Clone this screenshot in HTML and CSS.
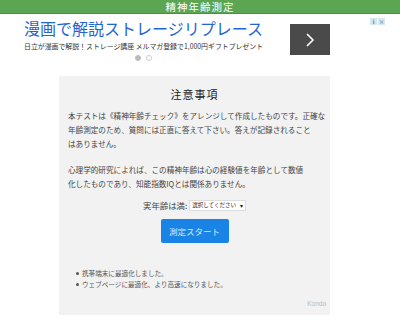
FILE: index.html
```html
<!DOCTYPE html>
<html lang="ja">

<head>
    <meta charset="UTF-8">
    <meta name="viewport" content="width=device-width, initial-scale=1.0">
    <title>精神年齢測定</title>
    <link rel="stylesheet" href="styles.css">
</head>

<body>
    <header class="site-header">精神年齢測定</header>

    <!-- Ad banner -->
    <div class="ad">
        <div class="ad-badges">
            <span class="ad-badge ad-info">i</span>
            <span class="ad-badge ad-close">&times;</span>
        </div>
        <div class="ad-row">
            <div class="ad-text">
                <div class="ad-title">漫画で解説ストレージリプレース</div>
                <div class="ad-sub">日立が漫画で解説！ストレージ講座 メルマガ登録で1,000円ギフトプレゼント</div>
                <div class="ad-dots">
                    <span class="dot dot-on"></span>
                    <span class="dot"></span>
                </div>
            </div>
            <div class="ad-next">
                <svg width="12" height="14" viewBox="0 0 12 14">
                    <polyline points="3,1 9,7 3,13" fill="none" stroke="#fff" stroke-width="1.6" />
                </svg>
            </div>
        </div>
    </div>

    <div class="card">
        <h1 class="card-title">注意事項</h1>
        <p class="note">本テストは《精神年齢チェック》をアレンジして作成したものです。正確な<br>年齢測定のため、質問には正直に答えて下さい。答えが記録されること<br>はありません。</p>
        <p class="note second">心理学的研究によれば、この精神年齢は心の経験値を年齢として数値<br>化したものであり、知能指数IQとは関係ありません。</p>

        <div class="age-row">
            <label>実年齢は満:</label>
            <span class="select">選択してください <span class="caret">&#9662;</span></span>
        </div>

        <button class="start-btn">測定スタート</button>

        <ul class="updates">
            <li>携帯端末に最適化しました。</li>
            <li>ウェブページに最適化、より高速になりました。</li>
        </ul>

        <div class="credit">Kondo</div>
    </div>
</body>

</html>
```

FILE: styles.css
```css
body {
    margin: 0;
    font-family: "Noto Sans CJK JP", "Noto Sans", sans-serif;
    background-color: #fff;
    color: #333;
}

.site-header {
    height: 13px;
    line-height: 13px;
    background-color: #5ca553;
    border-bottom: 1px solid #4b8e44;
    color: #fff;
    font-size: 10.5px;
    text-align: center;
    letter-spacing: 1px;
}

/* Ad banner */
.ad {
    position: relative;
    height: 62px;
}

.ad-badges {
    position: absolute;
    top: 4px;
    right: 15px;
    display: flex;
    gap: 1px;
}

.ad-badge {
    width: 7px;
    height: 7px;
    background-color: #d6e6ef;
    color: #3a9ad9;
    font-size: 6px;
    line-height: 7px;
    text-align: center;
    font-family: "DejaVu Sans", sans-serif;
    font-weight: bold;
}

.ad-close {
    color: #7fa3b8;
}

.ad-row {
    display: flex;
    padding: 3px 0 0 24px;
}

.ad-text {
    width: 266px;
}

.ad-title {
    font-size: 16px;
    line-height: 22px;
    color: #1f66d1;
    white-space: nowrap;
}

.ad-sub {
    margin-top: 3px;
    font-size: 6.9px;
    line-height: 9px;
    color: #333;
    white-space: nowrap;
}

.ad-dots {
    display: flex;
    justify-content: center;
    gap: 5px;
    width: 238px;
    margin-top: 4px;
}

.dot {
    width: 4px;
    height: 4px;
    border-radius: 50%;
    border: 1px solid #ccc;
    background-color: #fff;
}

.dot-on {
    background-color: #bbb;
    border-color: #bbb;
}

.ad-next {
    width: 40px;
    height: 31px;
    margin-top: 7px;
    background-color: #4a4a4a;
    display: flex;
    align-items: center;
    justify-content: center;
}

/* Notice card */
.card {
    width: 253px;
    margin: 0 0 0 59px;
    padding: 10px 9px 6px;
    background-color: #f2f2f2;
}

.card-title {
    margin: 0;
    font-size: 11px;
    line-height: 16px;
    font-weight: normal;
    text-align: center;
    letter-spacing: 1px;
    color: #222;
}

.note {
    margin: 7px 0 0;
    font-size: 7.6px;
    line-height: 14px;
    color: #444;
    white-space: nowrap;
}

.note.second {
    margin-top: 12px;
}

.age-row {
    margin-top: 7px;
    height: 14px;
    display: flex;
    align-items: center;
    justify-content: center;
    gap: 2px;
    font-size: 8.4px;
    color: #444;
}

.select {
    display: inline-flex;
    align-items: center;
    gap: 4px;
    height: 9px;
    padding: 0 2px;
    background-color: #fff;
    border: 1px solid #ddd;
    font-size: 5.5px;
    color: #222;
}

.caret {
    font-size: 6px;
}

.start-btn {
    display: block;
    width: 68px;
    height: 24px;
    margin: 7px auto 0;
    padding: 0;
    border: none;
    border-radius: 2px;
    background-color: #1a84e6;
    color: #d8ebfb;
    font-family: inherit;
    font-size: 8.5px;
}

.updates {
    margin: 25px 0 0;
    padding-left: 8px;
    list-style: none;
    font-size: 6.6px;
    line-height: 11px;
    color: #555;
}

.updates li::before {
    content: "";
    display: inline-block;
    width: 3px;
    height: 3px;
    margin-right: 3px;
    border-radius: 50%;
    background-color: #555;
    vertical-align: 1px;
}

.credit {
    margin: 9px -5px 0 0;
    font-size: 6.5px;
    line-height: 10px;
    text-align: right;
    color: #bbb;
    font-family: "Liberation Sans", sans-serif;
}
```
